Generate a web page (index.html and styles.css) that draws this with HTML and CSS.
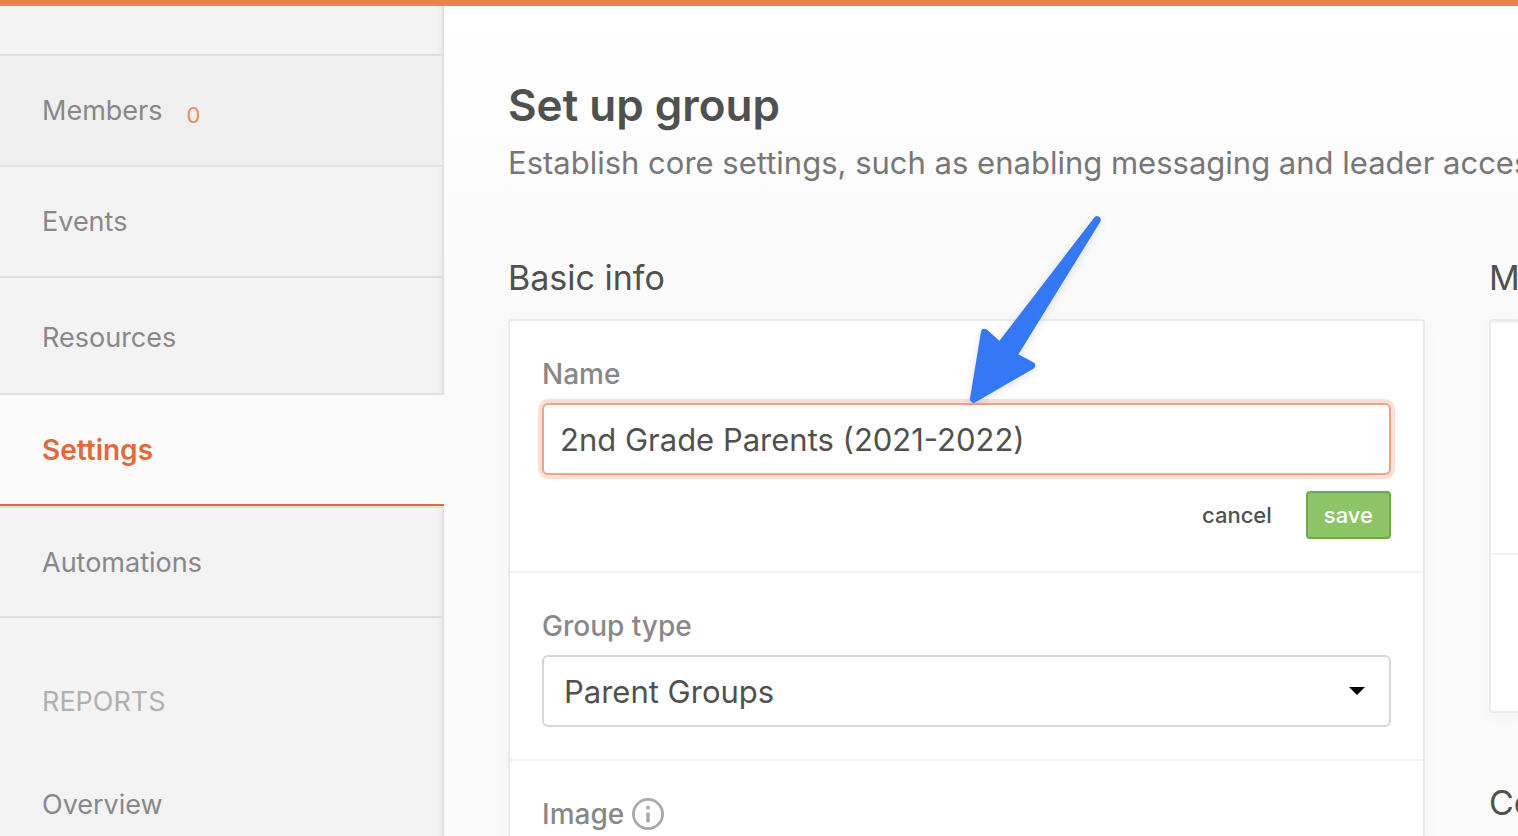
FILE: index.html
```html
<!DOCTYPE html>
<html lang="en">
<head>
<meta charset="utf-8">
<title>Set up group</title>
<link rel="stylesheet" href="styles.css">
</head>
<body>
<div class="page">
  <nav class="sidebar">
    <div class="sidebar-top"></div>
    <a class="nav-item nav-item-hover" href="#">Members <span class="nav-count">0</span></a>
    <a class="nav-item" href="#">Events</a>
    <a class="nav-item nav-item-tall" href="#">Resources</a>
    <a class="nav-item nav-item-active" href="#" aria-current="page">Settings</a>
    <a class="nav-item nav-item-after" href="#">Automations</a>
    <h2 class="nav-heading">REPORTS</h2>
    <a class="nav-link" href="#">Overview</a>
  </nav>
  <main class="main">
    <h1 class="title">Set up group</h1>
    <p class="subtitle">Establish core settings, such as enabling messaging and leader access</p>
    <div class="columns">
      <section class="column">
        <h2 class="section-title">Basic info</h2>
        <form class="card card-open">
          <div class="field">
            <label class="label" for="name">Name</label>
            <input class="control control-focus" id="name" type="text" value="2nd Grade Parents (2021-2022)">
            <div class="actions">
              <button class="button button-plain" type="button">cancel</button>
              <button class="button button-save" type="button">save</button>
            </div>
          </div>
          <div class="field">
            <label class="label" for="type">Group type</label>
            <div class="select-wrap">
              <select class="control control-select" id="type"><option>Parent Groups</option></select>
              <svg class="caret" width="16" height="8" viewBox="0 0 16 8" aria-hidden="true"><path d="M0 0H16L8 8Z"/></svg>
            </div>
          </div>
          <div class="field field-last">
            <div class="label label-icon">Image
              <svg class="info" width="32" height="32" viewBox="0 0 32 32" aria-hidden="true"><circle cx="16" cy="16" r="14.6" fill="none" stroke="#aaa" stroke-width="2.8"/><path d="M14.2 8H17.8V11.2H14.2ZM14.2 14.6H17.8V24.2H14.2Z" fill="#aaa"/></svg>
            </div>
          </div>
        </form>
      </section>
      <section class="column">
        <h2 class="section-title">M</h2>
        <div class="card card-cut">
          <div class="cut-row cut-row-tall"></div>
          <div class="cut-row"></div>
        </div>
        <h2 class="section-title section-title-next">Co</h2>
      </section>
    </div>
  </main>
  <svg class="arrow" width="160" height="210" viewBox="960 206 160 210" aria-hidden="true"><path d="M1097 220L1013.2 355.8L1031.5 365.5L973.6 399L984.6 332.6L999.9 346.3Z" fill="#3478f6" stroke="#3478f6" stroke-width="7.4" stroke-linejoin="round"/></svg>
</div>
</body>
</html>
```
FILE: styles.css
```css
* {
  box-sizing: border-box;
}

body {
  margin: 0;
  font-family: Inter, "Liberation Sans", sans-serif;
  color: #50504e;
}

.page {
  position: relative;
  display: flex;
  min-height: 100vh;
  overflow: hidden;
  border-top: 6px solid #ec8055;
  background: linear-gradient(#fff 0, #fafafa 260px);
}

.sidebar {
  flex: 0 0 444px;
  border-right: 2px solid #e0e0e0;
  background: #f3f3f3;
  box-shadow: inset -8px 0 8px -8px rgba(0, 0, 0, 0.06);
  font-size: 27px;
}

.sidebar-top {
  height: 50px;
  border-bottom: 2px solid #e0e0e0;
}

.nav-item {
  display: flex;
  align-items: center;
  height: 111px;
  padding: 0 42px;
  border-bottom: 2px solid #e0e0e0;
  color: #888;
  text-decoration: none;
}

.nav-item-hover {
  background: #efefef;
}

.nav-item-tall {
  height: 117px;
  padding-top: 3px;
}

.nav-item-active {
  position: relative;
  margin-right: -2px;
  border-bottom-color: #e06a3a;
  background: #fafafa;
  color: #e06a3a;
  font-size: 28px;
  font-weight: 600;
}

.nav-item-after {
  height: 112px;
  border-top: 2px solid #e0e0e0;
}

.nav-count {
  padding: 8px 0 0 24px;
  color: #f08a5e;
  font-size: 22px;
}

.nav-heading {
  margin: 64px 42px 0;
  color: #b0b0b0;
  font-size: 27px;
  font-weight: 400;
  line-height: 40px;
}

.nav-link {
  display: block;
  padding: 63px 42px 8px;
  color: #888;
  line-height: 40px;
  text-decoration: none;
}

.main {
  display: flex;
  flex: 1;
  flex-direction: column;
  min-width: 0;
  padding: 69px 0 0 64px;
}

.title {
  margin: 0;
  font-size: 44px;
  font-weight: 600;
  line-height: 60px;
}

.subtitle {
  margin: 8px 0 74px;
  overflow: hidden;
  color: #777;
  font-size: 31px;
  line-height: 40px;
  white-space: nowrap;
}

.columns {
  display: grid;
  flex: 1;
  grid-template-columns: minmax(0, 1fr) 29px;
  gap: 64px;
}

.column {
  display: flex;
  flex-direction: column;
}

.section-title {
  margin: 0 0 20px;
  font-size: 34px;
  font-weight: 400;
  line-height: 42px;
}

.section-title-next {
  margin-top: 69px;
}

.card {
  border: 2px solid #eaeaea;
  border-radius: 4px;
  background: #fff;
  box-shadow: 0 4px 16px rgba(0, 0, 0, 0.03);
}

.card-open {
  flex: 1;
  border-bottom: 0;
  border-radius: 4px 4px 0 0;
}

.card-cut {
  border-right: 0;
  border-radius: 4px 0 0 4px;
}

.cut-row {
  height: 156px;
}

.cut-row-tall {
  height: 234px;
  border-top: 2px solid #f3f3f3;
  border-bottom: 2px solid #f3f3f3;
}

.field {
  padding: 32px;
  border-bottom: 2px solid #f3f3f3;
}

.field-last {
  padding-bottom: 0;
  border-bottom: 0;
}

.label {
  display: block;
  margin-bottom: 8px;
  color: #888;
  font-size: 28px;
  font-weight: 500;
  line-height: 42px;
}

.label-icon {
  display: flex;
  align-items: center;
  gap: 8px;
  margin-bottom: 0;
}

.control {
  display: block;
  width: 100%;
  height: 72px;
  padding: 0 16px;
  border: 2px solid #d6d6d6;
  border-radius: 6px;
  outline: 0;
  background: #fff;
  color: #50504e;
  font: 400 31px Inter, "Liberation Sans", sans-serif;
}

.control-focus {
  border-color: #eda486;
  box-shadow: 0 0 0 4px #fadfd6;
}

.control-select {
  padding: 0 20px;
  appearance: none;
}

.select-wrap {
  position: relative;
}

.caret {
  position: absolute;
  top: 32px;
  right: 26px;
  pointer-events: none;
}

.actions {
  display: flex;
  justify-content: flex-end;
  gap: 16px;
  margin-top: 16px;
}

.button {
  height: 48px;
  padding: 0 16px;
  border: 2px solid transparent;
  border-radius: 4px;
  background: none;
  color: #50504e;
  font: 500 22px Inter, "Liberation Sans", sans-serif;
}

.button-save {
  border-color: #71a84b;
  background: #8dc566;
  color: #fff;
}

.arrow {
  position: absolute;
  top: 200px;
  left: 960px;
  filter: drop-shadow(0 2px 4px rgba(0, 0, 0, 0.12));
  pointer-events: none;
}
```
